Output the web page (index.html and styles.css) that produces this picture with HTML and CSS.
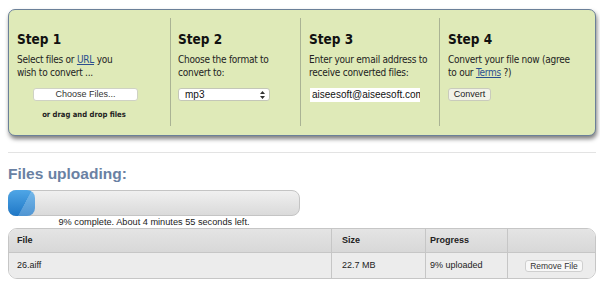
FILE: index.html
```html
<!DOCTYPE html>
<html>
<head>
<meta charset="utf-8">
<link rel="stylesheet" href="styles.css">
</head>
<body>
<div class="page">
  <div class="panel">
    <div class="step s1">
      <h2>Step 1</h2>
      <p>Select files or <a href="#">URL</a> you<br>wish to convert ...</p>
      <div class="choose">
        <div class="btn-choose">Choose Files...</div>
        <div class="drop">or drag and drop files</div>
      </div>
    </div>
    <div class="step s2">
      <h2>Step 2</h2>
      <p>Choose the format to<br>convert to:</p>
      <div class="select"><span>mp3</span>
        <svg class="arrows" width="5" height="8" viewBox="0 0 5 8"><path d="M2.5 0 L5 3 L0 3 Z M0 5 L5 5 L2.5 8 Z" fill="#333"/></svg>
      </div>
    </div>
    <div class="step s3">
      <h2>Step 3</h2>
      <p>Enter your email address to<br>receive converted files:</p>
      <div class="email">aiseesoft@aiseesoft.com</div>
    </div>
    <div class="step s4">
      <h2>Step 4</h2>
      <p>Convert your file now (agree<br>to our <a href="#">Terms</a> ?)</p>
      <div class="btn-convert">Convert</div>
    </div>
  </div>

  <div class="sep"></div>
  <h1 class="title">Files uploading:</h1>
  <div class="bar"><div class="fill"></div></div>
  <div class="status">9% complete. About 4 minutes 55 seconds left.</div>

  <div class="table">
    <div class="th c1">File</div>
    <div class="th c2">Size</div>
    <div class="th c3">Progress</div>
    <div class="th c4"></div>
    <div class="td c1">26.aiff</div>
    <div class="td c2">22.7 MB</div>
    <div class="td c3">9% uploaded</div>
    <div class="td c4"><div class="btn-remove">Remove File</div></div>
  </div>
</div>
</body>
</html>
```
FILE: styles.css
```css
body {
  margin: 0;
  background: #fff;
  font-family: "DejaVu Sans Condensed", "DejaVu Sans", sans-serif;
  color: #1a1a1a;
}
.page {
  padding: 9px 4px 0 8px;
}
.panel {
  display: flex;
  background: #dfeab8;
  border: 1px solid #6b8099;
  border-radius: 7px;
  box-shadow: 1px 3px 4px rgba(0, 0, 0, 0.5);
  padding: 8px 0 9px;
}
.step {
  box-sizing: border-box;
  height: 108px;
  padding: 13px 0 0 8px;
  border-left: 1px solid #aab394;
}
.s1 { width: 161px; border-left: none; }
.s2 { width: 130px; padding-left: 7px; }
.s3 { width: 139px; }
.s4 { width: 156px; }
.step h2 {
  margin: 0;
  font-size: 13.5px;
  line-height: 16px;
  font-weight: bold;
  color: #111;
}
.step p {
  margin: 6px 0 0;
  font-size: 10px;
  line-height: 13px;
  letter-spacing: -0.25px;
  white-space: nowrap;
  color: #222;
}
.step a {
  color: #2b4f8f;
  text-decoration: underline;
}
.choose {
  margin: 9px 0 0 16px;
  width: 105px;
}
.btn-choose {
  box-sizing: border-box;
  height: 13px;
  background: #fff;
  border: 1px solid #cfd2c4;
  border-radius: 3px;
  font: 9px/11px "Liberation Sans", sans-serif;
  color: #333;
  text-align: center;
}
.drop {
  margin-top: 8px;
  padding-right: 3px;
  text-align: center;
  font-size: 7.6px;
  line-height: 11px;
  font-weight: bold;
  color: #222;
  white-space: nowrap;
}
.select {
  box-sizing: border-box;
  margin-top: 9px;
  width: 92px;
  height: 13px;
  background: #fff;
  border: 1px solid #c4c7b8;
  border-radius: 3px;
  display: flex;
  align-items: center;
  justify-content: space-between;
  padding: 0 4px 0 6px;
  font: 10px/11px "Liberation Sans", sans-serif;
  color: #111;
}
.arrows { display: block; }
.email {
  box-sizing: border-box;
  margin: 9px 0 0 1px;
  width: 110px;
  height: 14px;
  background: #fff;
  padding-left: 2px;
  overflow: hidden;
  white-space: nowrap;
  font: 10px/14px "Liberation Sans", sans-serif;
  color: #111;
}
.btn-convert {
  box-sizing: border-box;
  margin-top: 9px;
  width: 43px;
  height: 13px;
  background: #f1f2e8;
  border: 1px solid #c9cbbc;
  border-radius: 3px;
  font: 9px/11px "Liberation Sans", sans-serif;
  color: #222;
  text-align: center;
}
.sep {
  margin-top: 16px;
  height: 1px;
  background: #e3e3e3;
}
.title {
  margin: 12px 0 0;
  font: bold 15.5px/18px "Liberation Sans", sans-serif;
  color: #6a81a3;
}
.bar {
  box-sizing: border-box;
  margin-top: 7px;
  width: 292px;
  height: 26px;
  border: 1px solid #c4c4c4;
  border-radius: 8px;
  background: linear-gradient(#f0f0f0, #dadada);
}
.fill {
  margin: -1px 0 0 -1px;
  width: 27px;
  height: 26px;
  border-radius: 8px;
  background:
    linear-gradient(118deg, rgba(255,255,255,0) 58%, rgba(255,255,255,0.22) 59%),
    linear-gradient(#4fa6e6, #1f77c6);
}
.status {
  margin-top: 1px;
  width: 292px;
  text-align: center;
  font: 9.2px/11px "Liberation Sans", sans-serif;
  color: #222;
}
.table {
  box-sizing: border-box;
  width: 588px;
  border: 1px solid #c6c6c6;
  border-radius: 9px;
  overflow: hidden;
  display: grid;
  grid-template-columns: 322px 94px 82px 1fr;
  font: 9px "Liberation Sans", sans-serif;
  color: #222;
}
.th {
  box-sizing: border-box;
  height: 24px;
  line-height: 23px;
  border-bottom: 1px solid #c6c6c6;
  background: linear-gradient(#e4e4e4, #d8d8d8);
  font-weight: bold;
}
.td {
  box-sizing: border-box;
  height: 25px;
  line-height: 25px;
  background: #ececec;
}
.c1 { padding-left: 8px; }
.c2 { padding-left: 10px; border-left: 1px solid #c6c6c6; }
.c3 { padding-left: 4px; border-left: 1px solid #c6c6c6; }
.c4 { border-left: 1px solid #c6c6c6; }
.td.c4 {
  display: flex;
  align-items: center;
  padding: 1px 0 0 17px;
}
.btn-remove {
  box-sizing: border-box;
  width: 58px;
  height: 12px;
  background: #f8f8f8;
  border: 1px solid #cfcfcf;
  border-radius: 3px;
  font-size: 8.5px;
  line-height: 10px;
  text-align: center;
  color: #333;
}
```
